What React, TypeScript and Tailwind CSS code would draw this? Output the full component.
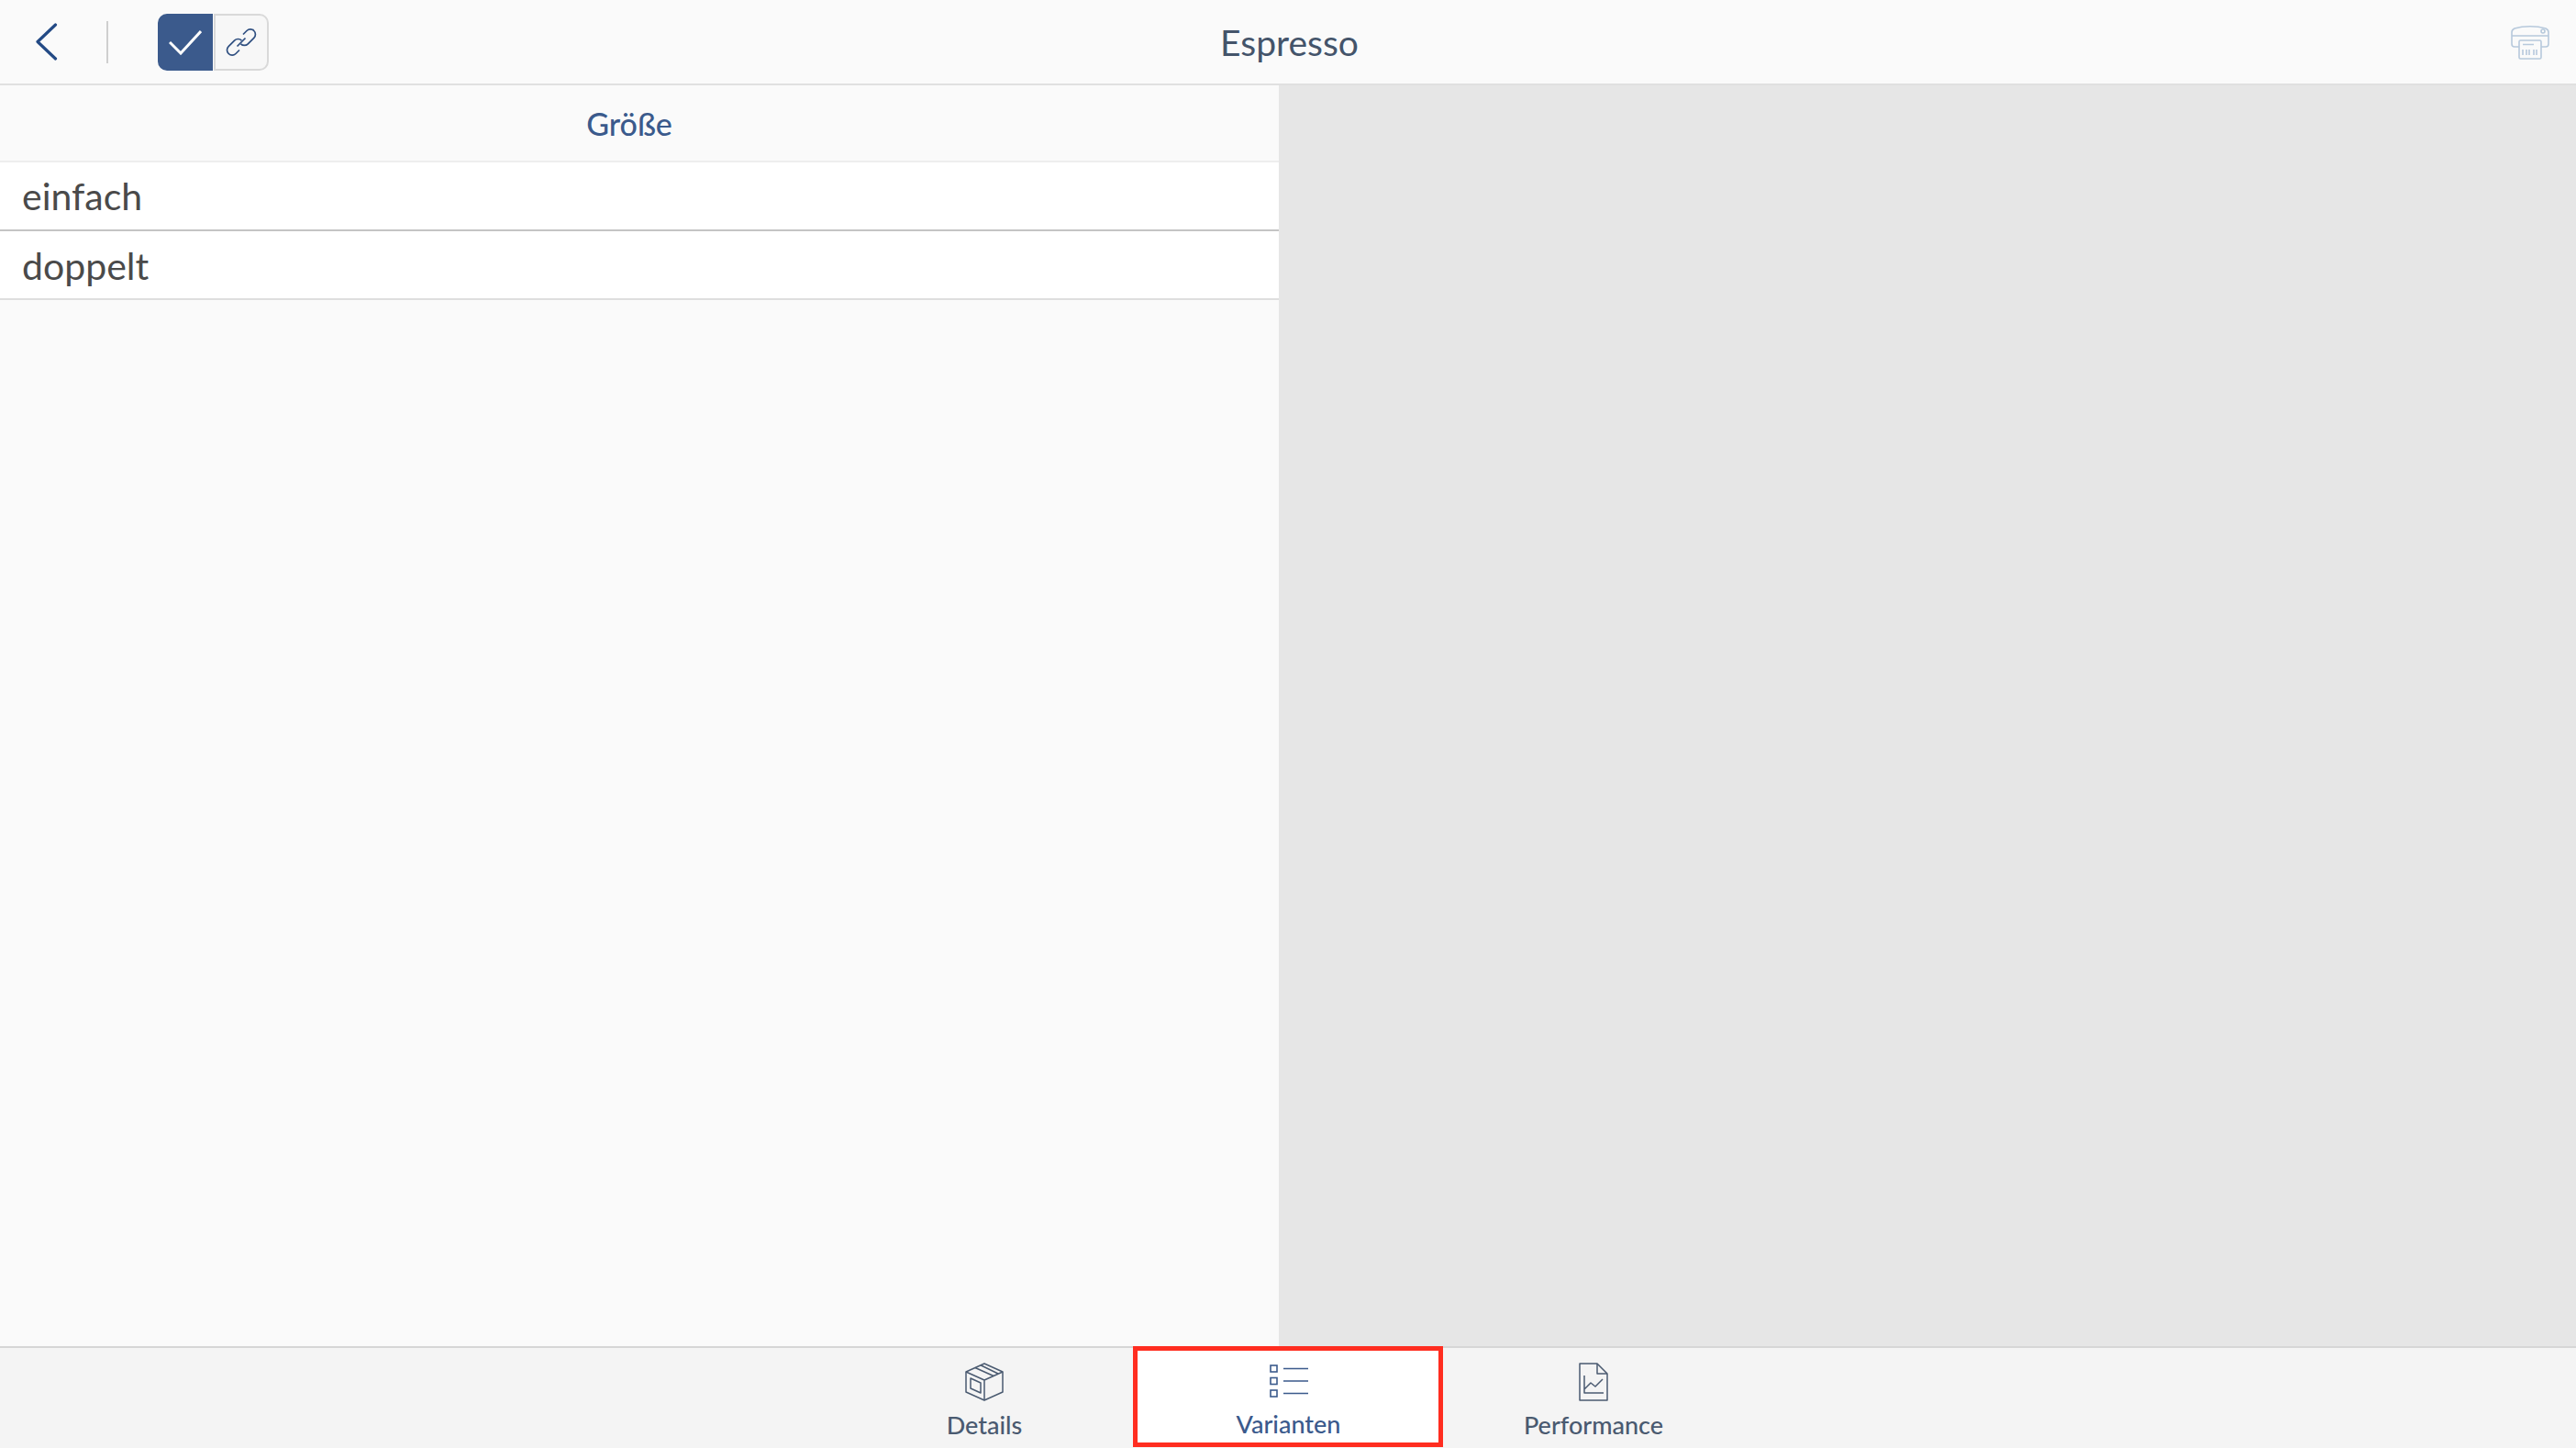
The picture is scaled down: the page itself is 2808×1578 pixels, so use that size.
const font = { fontFamily: 'Lato, "Noto Sans", sans-serif' };

const BackIcon = () => (
  <svg viewBox="0 0 24 41" className="h-[41px] w-[24px] text-[#234a85]" fill="none" stroke="currentColor" strokeWidth="3.200" strokeLinecap="round" strokeLinejoin="round">
    <path d="M21.500 2 2 20.500 21.500 39" />
  </svg>
);

const CheckIcon = () => (
  <svg viewBox="0 0 36 28" className="h-[28px] w-[36px] text-white" fill="none" stroke="currentColor" strokeWidth="3">
    <path d="M1 14 13 26 35 2" />
  </svg>
);

const ChainIcon = () => (
  <svg viewBox="0 0 36 36" className="h-[36px] w-[36px] text-[#2f4f80]" fill="none" stroke="currentColor" strokeWidth="1.700">
    <path d="M20 9.500 24 5.500a5.500 5.500 0 0 1 7.800 0l-1.300-1.300 1.300 1.300a5.500 5.500 0 0 1 0 7.800l-6.500 6.500a5.500 5.500 0 0 1-7.800 0" />
    <path d="M16 26.500 12 30.500a5.500 5.500 0 0 1-7.800 0l-.1-.1a5.500 5.500 0 0 1 0-7.800l6.500-6.500a5.500 5.500 0 0 1 7.800 0" />
    <path d="M13.500 22.500 22.500 13.500" />
  </svg>
);

const PrinterIcon = () => (
  <svg viewBox="0 0 42 40" className="h-[40px] w-[42px] text-[#b7c9dc]" fill="none" stroke="currentColor" strokeWidth="1.600">
    <path d="M1 22V9c0-2 1-3 3-4 10-3 24-3 34 0 2 1 3 2 3 4v13c0 2-1 3-3 3h-6M10 25H4c-2 0-3-1-3-3M1 13h40" />
    <circle cx="35" cy="8" r="2" />
    <rect x="9" y="18" width="24" height="20" rx="1.500" fill="#fafafa" />
    <path d="M13 22.500h12M13 28v6M17 28v6M20 28v6M25 28v6M28 28v6" />
  </svg>
);

const BoxIcon = () => (
  <svg viewBox="0 0 42 42" className="h-[42px] w-[42px] text-[#4a5a70]" fill="none" stroke="currentColor" strokeWidth="1.500" strokeLinejoin="round">
    <path d="M21 1 41 10v22L21 41 1 32V10z" />
    <path d="M1 10l20 9 20-9M21 19v22" />
    <path d="M11 5.500 31 14.500M17 2.800 36 12" />
    <path d="M6 17l11 5v11L6 28z" />
  </svg>
);

const ListIcon = () => (
  <svg viewBox="0 0 42 38" className="h-[38px] w-[42px] text-[#3b5a8c]" fill="none" stroke="currentColor" strokeWidth="1.600">
    <rect x="1" y="1" width="7" height="7" />
    <rect x="1" y="14.500" width="7" height="7" />
    <rect x="1" y="28" width="7" height="7" />
    <path d="M15 4.500h27M15 18h27M15 31.500h27" />
  </svg>
);

const ReportIcon = () => (
  <svg viewBox="0 0 32 42" className="h-[42px] w-[32px] text-[#4a5a70]" fill="none" stroke="currentColor" strokeWidth="1.500" strokeLinejoin="round">
    <path d="M1 1h19l11 11v29H1z" />
    <path d="M20 1v11h11" />
    <path d="M6 14v19h21M6 29l7-7 5 4 8-8" />
  </svg>
);

export default function App() {
  return (
    <div className="flex h-[1578px] w-[2808px] flex-col overflow-hidden bg-[#e6e6e6]" style={font}>
      <header className="relative flex h-[93px] shrink-0 items-center border-b-2 border-[#e0e0e0] bg-[#fafafa]">
        <div className="ml-[39px]">
          <BackIcon />
        </div>
        <div className="ml-[53px] h-[46px] w-[2px] bg-[#cfcfcf]" />
        <div className="ml-[54px] flex h-[62px]">
          <div className="flex w-[60px] items-center justify-center rounded-l-[10px] bg-[#3b5a8c]">
            <CheckIcon />
          </div>
          <div className="ml-[1px] flex w-[60px] items-center justify-center rounded-r-[10px] border-2 border-[#d9d9d9] bg-[#f7f7f7]">
            <ChainIcon />
          </div>
        </div>
        <h1 className="absolute left-0 right-0 pl-[3px] pt-[2px] text-center text-[39px] text-[#44546a]">Espresso</h1>
        <div className="ml-auto mr-[29px]">
          <PrinterIcon />
        </div>
      </header>

      <main className="flex min-h-0 flex-1">
        <section className="w-[1394px] bg-[#fafafa]">
          <div className="flex h-[82px] items-center justify-center pr-[22px] text-[34px] font-medium text-[#3b5a8c]">Größe</div>
          <div className="flex h-[77px] items-center border-t-2 border-b-2 border-t-[#eeeeee] border-b-[#c4c4c4] bg-white pl-[24px] text-[41px] text-[#4a4a4a]">einfach</div>
          <div className="flex h-[75px] items-center border-b-2 border-[#dedede] bg-white pl-[24px] pt-[2px] text-[41px] text-[#4a4a4a]">doppelt</div>
        </section>
      </main>

      <nav className="flex h-[111px] shrink-0 justify-center border-t-2 border-[#d6d6d6] bg-[#f4f4f4]">
        <div className="flex w-[332px] flex-col items-center pl-[2px] pt-[16px] text-[#4a5a70]">
          <BoxIcon />
          <span className="mt-[9px] text-[27px] font-medium leading-[34px]">Details</span>
        </div>
        <div className="relative -mx-[3px] -mt-[2px] mb-[1px] flex w-[338px] flex-col items-center border-[5px] border-[#ff2d20] bg-white pl-[1px] pt-[15px] text-[#3b5a8c]">
          <ListIcon />
          <span className="mt-[10px] text-[27px] font-medium leading-[34px]">Varianten</span>
        </div>
        <div className="flex w-[332px] flex-col items-center pl-[2px] pt-[16px] text-[#4a5a70]">
          <ReportIcon />
          <span className="mt-[9px] text-[27px] font-medium leading-[34px]">Performance</span>
        </div>
      </nav>
    </div>
  );
}
